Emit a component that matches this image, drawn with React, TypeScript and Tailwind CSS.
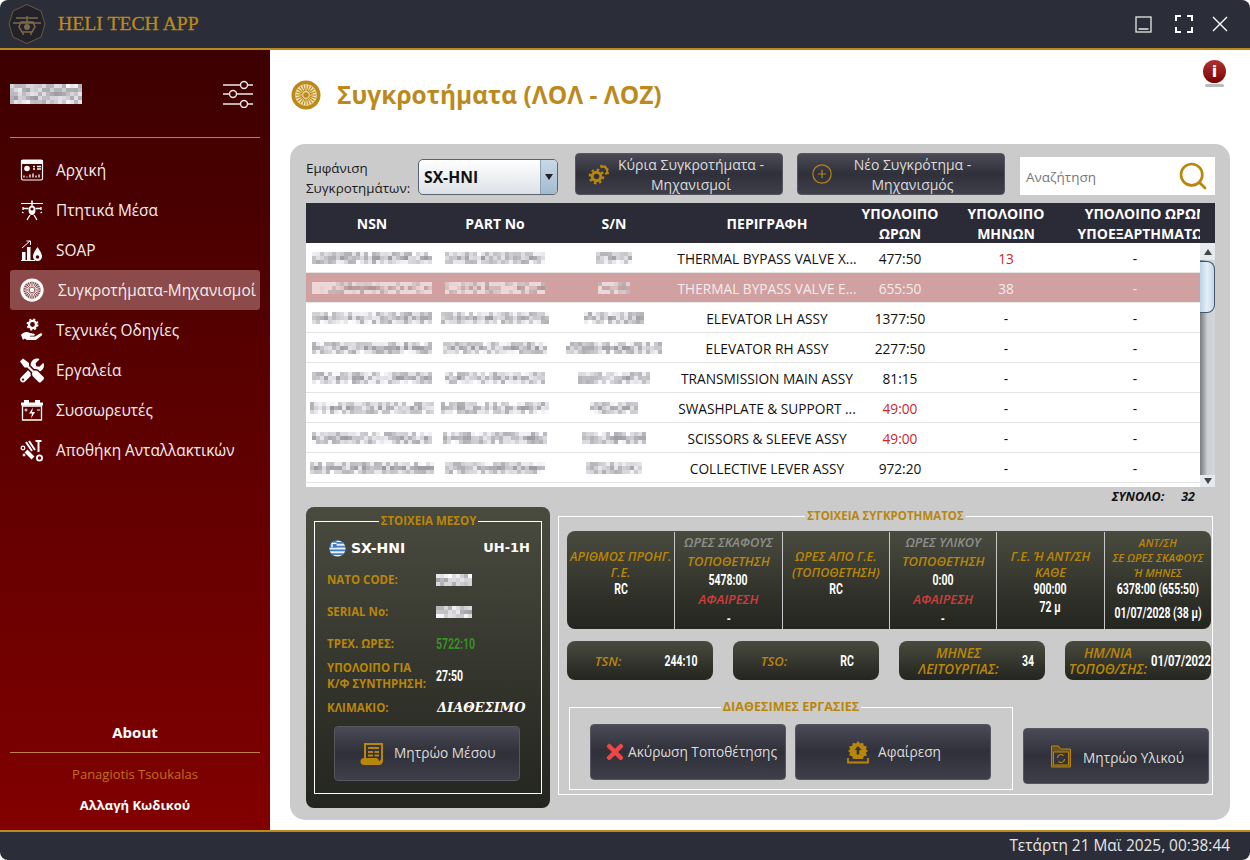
import React from 'react';
import { CirclePlus, Search } from 'lucide-react';
import { FaTimes, FaTools } from 'react-icons/fa';

const GOLD = '#b8860b';

// mosaic used for the censored values
const Pix = ({ w, seed, pink, h = 3 }: { w: number; seed: number; pink?: boolean; h?: number }) => {
  const cols = Math.round(w / 4);
  return (
    <div className="flex flex-col shrink-0" style={{ width: cols * 4 }}>
      {Array.from({ length: h }).map((_, r) => (
        <div key={r} className="flex h-[4px]">
          {Array.from({ length: cols }).map((_, c) => {
            const n = Math.abs(Math.sin(seed * 12.9 + c * 78.2 + r * 37.7) * 43758.5) % 1;
            const edge = r === 0 || r === h - 1 ? 20 : 0;
            const v = Math.round(155 + n * 80 + edge);
            const bg = pink
              ? `rgb(${Math.min(240, v + 20)},${Math.min(215, v - 5)},${Math.min(215, v - 5)})`
              : `rgb(${v},${v},${Math.min(255, v + 4)})`;
            return <span key={c} className="w-[4px] h-[4px]" style={{ background: bg }} />;
          })}
        </div>
      ))}
    </div>
  );
};

const Num = ({ children, className = '', size = 'text-[14px]', leading = 'leading-[16px]' }: { children: React.ReactNode; className?: string; size?: string; leading?: string }) => (
  <span className={`inline-block scale-x-75 font-['Roboto'] font-bold whitespace-nowrap ${size} ${leading} ${className}`}>
    {children}
  </span>
);

const Wheel = ({ size, color, hub }: { size: number; color: string; hub: string }) => (
  <svg width={size} height={size} viewBox="0 0 32 32">
    <circle cx="16" cy="16" r="15.5" fill={color} />
    <circle cx="16" cy="16" r="11.5" fill={hub} />
    {Array.from({ length: 20 }).map((_, i) => {
      const a = (i * Math.PI) / 10;
      return (
        <line
          key={i}
          x1={16 + Math.cos(a) * 4}
          y1={16 + Math.sin(a) * 4}
          x2={16 + Math.cos(a) * 11}
          y2={16 + Math.sin(a) * 11}
          stroke={color}
          strokeWidth="1.2"
        />
      );
    })}
    <circle cx="16" cy="16" r="3" fill={color} />
  </svg>
);

const DashIcon = () => (
  <svg width="24" height="24" viewBox="0 0 24 24" fill="none" stroke="#fff">
    <rect x="1.5" y="2" width="21" height="20" rx="1.5" strokeWidth="1.2" />
    <path d="M1.5 2.5h21v3h-21z" fill="#fff" />
    <circle cx="7" cy="10.5" r="2.8" fill="#fff" stroke="none" />
    <path d="M13 8.5h2M13 11h2M17 8.5h4M17 11h4M4 19.5v-2M7 19.5v-1M10 19.5v-3M13 19.5v-4M16 19.5v-2M19 19.5v-3" strokeWidth="1.3" />
  </svg>
);

const HeliIcon = () => (
  <svg width="24" height="24" viewBox="0 0 24 24" fill="#fff" stroke="#fff">
    <path d="M1 5.5h22" strokeWidth="1.2" />
    <path d="M12 2.5v5" strokeWidth="1.6" />
    <path d="M8.5 12c0-3 1.5-4.5 3.5-4.5s3.5 1.5 3.5 4.5-1.5 5-3.5 5-3.5-2-3.5-5z" stroke="none" />
    <circle cx="12" cy="11" r="1.6" fill="#4a0000" stroke="none" />
    <path d="M3 10.5h5.5M15.5 10.5H21M3 9v3M21 9v3M10 17l-3 5M14 17l3 5M2 14l1.5 1M22 14l-1.5 1" strokeWidth="1.3" fill="none" />
  </svg>
);

const SoapIcon = () => (
  <svg width="24" height="24" viewBox="0 0 24 24" fill="#fff">
    <path d="M1 22h14v1H1z" />
    <rect x="2" y="14" width="3.5" height="8" />
    <rect x="7" y="9" width="3.5" height="13" />
    <path d="M2 10l8-7M6.5 3H10.5V7" stroke="#fff" strokeWidth="1" fill="none" />
    <path d="M17.5 9c2 3.500 4.500 6 4.500 9.500a4.500 4.500 0 0 1-9 0C13 15 15.500 12.500 17.500 9z" />
    <circle cx="17.500" cy="19" r="1.800" fill="#4a0000" />
  </svg>
);

const HandGearIcon = () => (
  <svg width="24" height="24" viewBox="0 0 24 24" fill="none">
    <circle cx="12.500" cy="6.500" r="3.600" stroke="#fff" strokeWidth="2.400" />
    <circle cx="12.500" cy="6.500" r="5.200" stroke="#fff" strokeWidth="1.600" strokeDasharray="2.100 2" />
    <path fill="#fff" d="M1 17c3-3.500 6-3.500 9-2l4 .8c1.500.4 1 2-.5 2H10v.6h5l5-3c1.700-.8 3 .7 1.700 2L16 22H7l-2.500-1.500L3 22z" />
  </svg>
);

const BatteryIcon = () => (
  <svg width="24" height="24" viewBox="0 0 24 24" fill="#fff">
    <rect x="4" y="2" width="5" height="3" />
    <rect x="15" y="2" width="5" height="3" />
    <rect x="1" y="4.500" width="22" height="3" />
    <path d="M2.500 8h19v14h-19z" fill="none" stroke="#fff" strokeWidth="1.300" />
    <path d="M13 9.500l-4 6h3l-1 5 4-6.500h-3z" />
    <path d="M4.500 12h3M6 10.500v3M17 12h3" stroke="#fff" />
  </svg>
);

const PartsIcon = () => (
  <svg width="24" height="24" viewBox="0 0 24 24" fill="#fff" stroke="#fff">
    <path d="M15.500 2h6v2h-2v10h-2V4h-2z" stroke="none" />
    <path d="M6 4l6 9M9 3l6 9" strokeWidth="2" />
    <path d="M6 13l7 7" strokeWidth="4" />
    <circle cx="3" cy="10" r="1.800" fill="none" strokeWidth="1.300" />
    <circle cx="19.500" cy="20" r="2.600" fill="none" strokeWidth="1.800" />
    <circle cx="4" cy="17" r="1" />
  </svg>
);

const GearsIcon = () => (
  <svg width="22" height="22" viewBox="0 0 22 22" fill="none" stroke={GOLD}>
    <circle cx="8.500" cy="13.500" r="4.300" strokeWidth="3" />
    <circle cx="8.500" cy="13.500" r="6.700" strokeWidth="2.400" strokeDasharray="2.600 2.660" />
    <path d="M12.500 4.300a4 4 0 1 1 4.800 7" strokeWidth="2.200" />
    <path d="M12.300 2.800a6.200 6.200 0 0 1 7.300 8.600" strokeWidth="1.800" strokeDasharray="2 1.900" />
  </svg>
);

const ScrollIcon = () => (
  <svg width="24" height="24" viewBox="0 0 24 24" fill={GOLD}>
    <path d="M4 1h19v17.500c0 2.500-1.500 4.500-4 4.500H4c-2 0-3.500-1.500-3.500-3.500S2 16 4 16zM6 3v13h10c1.500 0 2.500 1.200 3 3 .7-.3 2-1 2-2.500V3z" />
    <path d="M8 5h11v2H8zM8 9h5v2H8zM14.500 9H19v2h-4.500zM8 12.500h5v2H8zM14.500 12.500H19v2h-4.500z" />
  </svg>
);

const RemoveIcon = () => (
  <svg width="22" height="24" viewBox="0 0 22 24" fill={GOLD}>
    <path d="M11 1l2 2.500 3-.8.800 3 3 .8-.8 3L21 11l-2 1.500.8 3-3 .8-.8 2.700H6l-.8-2.700-3-.8.800-3L1 11l2-1.500-.8-3 3-.8.800-3 3 .8z" />
    <path d="M11 6l3.500 4h-2.200v4.500H9.700V10H7.500z" fill="#34343f" />
    <path d="M1 18v4.500h20V18" fill="none" stroke={GOLD} strokeWidth="1.800" />
  </svg>
);

const FolderIcon = () => (
  <svg width="20" height="24" viewBox="0 0 20 24" fill="none" stroke={GOLD}>
    <path d="M.5 2h7l2 3h10v18H.5z" strokeWidth="1" fill="#6b5220" />
    <rect x="2.500" y="8" width="15" height="13" fill="#34343f" strokeWidth="1" />
    <path d="M6.500 14a3.500 3.500 0 0 1 6-2.400M13.500 15a3.500 3.500 0 0 1-6 2.400" strokeWidth="1.200" />
  </svg>
);

const GreekFlag = () => (
  <svg width="17" height="17" viewBox="0 0 18 18">
    <defs>
      <clipPath id="flagclip">
        <circle cx="9" cy="9" r="8.500" />
      </clipPath>
    </defs>
    <g clipPath="url(#flagclip)">
      <rect width="18" height="18" fill="#e8eef5" />
      <path d="M0 2h18v2H0zM0 6h18v2H0zM0 10h18v2H0zM0 14h18v2H0z" fill="#3f7cc0" />
      <rect width="8" height="8" fill="#3f7cc0" />
      <path d="M3.200 0v8M0 3.500h8" stroke="#fff" strokeWidth="1.400" />
    </g>
  </svg>
);

const navItems = [
  { label: 'Αρχική', icon: <DashIcon /> },
  { label: 'Πτητικά Μέσα', icon: <HeliIcon /> },
  { label: 'SOAP', icon: <SoapIcon /> },
  { label: 'Συγκροτήματα-Μηχανισμοί', icon: <Wheel size={24} color="#fff" hub="#8c4a4a" />, active: true },
  { label: 'Τεχνικές Οδηγίες', icon: <HandGearIcon /> },
  { label: 'Εργαλεία', icon: <FaTools size={25} color="#fff" /> },
  { label: 'Συσσωρευτές', icon: <BatteryIcon /> },
  { label: 'Αποθήκη Ανταλλακτικών', icon: <PartsIcon /> },
];

const rows = [
  { nsn: 120, part: 100, sn: 36, desc: 'THERMAL BYPASS VALVE X...', hrs: '477:50', mon: '13', monRed: true },
  { nsn: 120, part: 100, sn: 32, desc: 'THERMAL BYPASS VALVE E...', hrs: '655:50', mon: '38', active: true },
  { nsn: 120, part: 108, sn: 60, desc: 'ELEVATOR LH ASSY', hrs: '1377:50', mon: '-' },
  { nsn: 120, part: 104, sn: 96, desc: 'ELEVATOR RH ASSY', hrs: '2277:50', mon: '-' },
  { nsn: 120, part: 100, sn: 72, desc: 'TRANSMISSION MAIN ASSY', hrs: '81:15', mon: '-' },
  { nsn: 124, part: 108, sn: 48, desc: 'SWASHPLATE & SUPPORT ...', hrs: '49:00', hrsRed: true, mon: '-' },
  { nsn: 120, part: 104, sn: 64, desc: 'SCISSORS & SLEEVE ASSY', hrs: '49:00', hrsRed: true, mon: '-' },
  { nsn: 124, part: 100, sn: 56, desc: 'COLLECTIVE LEVER ASSY', hrs: '972:20', mon: '-' },
];

const tableCols = 'grid grid-cols-[132px_114px_124px_182px_84px_128px_130px]';

const DarkButton = ({ className, children }: { className: string; children: React.ReactNode }) => (
  <button className={`flex items-center rounded-[4px] border border-[#55565f] bg-gradient-to-b from-[#4a4b56] via-[#30303a] to-[#3e3f49] text-[#dcdcdc] text-[13.7px] ${className}`}>
    {children}
  </button>
);

const Legend = ({ children, size = 'text-[11.5px]' }: { children: React.ReactNode; size?: string }) => (
  <legend className={`mx-auto px-[2px] leading-[14px] font-bold text-[#b8860b] whitespace-nowrap ${size}`}>{children}</legend>
);

const cardBg = 'bg-gradient-to-b from-[#4a4b3f] to-[#23251f]';
const goldLabel = 'text-[11.5px] font-bold text-[#b8860b] leading-[16px]';
const italic = 'italic font-semibold whitespace-nowrap';
const italicGold = `${italic} text-[12.6px] text-[#b8860b] leading-[16px]`;
const italicGoldTall = `${italic} text-[13px] text-[#b8860b] leading-[19px]`;
const italicGoldSmall = `${italic} text-[11px] text-[#b8860b] leading-[15px]`;
const italicGrey = `${italic} text-[12.8px] text-[#8c8f8c] leading-[19px]`;
const italicRed = `${italic} text-[13px] text-[#d23c3c] leading-[19px]`;

const InfoRow = ({ label, children, h = 'h-[32px]' }: { label: React.ReactNode; children: React.ReactNode; h?: string }) => (
  <div className={`flex items-center ${h}`}>
    <div className={`w-[109px] ${goldLabel}`}>{label}</div>
    {children}
  </div>
);

const SmallCard = ({ label, value, labelBox, labelSize, valueSize }: { label: React.ReactNode; value: string; labelBox: string; labelSize: string; valueSize?: string }) => (
  <div className={`flex items-center w-[146px] h-[39px] rounded-[8px] ${cardBg}`}>
    <div className={`${labelBox} text-center ${italic} text-[#b8860b] leading-[16px] ${labelSize}`}>{label}</div>
    <div className="flex-1 flex justify-center min-w-0">
      <Num className="text-white" size={valueSize}>{value}</Num>
    </div>
  </div>
);

export default function App() {
  return (
    <div className="w-[1250px] h-[860px] flex flex-col overflow-hidden rounded-[8px] bg-white font-['Open_Sans',sans-serif]">
      {/* title bar */}
      <div className="h-[50px] shrink-0 flex items-center bg-[#2b2d38] border-b-2 border-[#bc8a1c] pl-[8px] pr-[22px]">
        <svg width="38" height="40" viewBox="0 0 38 40" fill="none">
          <path d="M19 .5l14 6.500 4 13-4 13-14 6.500-14-6.500L1 20 5 7z" fill="#23222a" stroke="#6b5a3a" />
          <path d="M8 14h22M19 12v6M5 19h28M13 18h12l2 5-3 5H14l-3-5zM15 28v3M23 28v3" stroke="#7c6a48" strokeWidth="1.500" />
          <circle cx="19" cy="23" r="3" fill="#7c6a48" />
        </svg>
        <div className="ml-[12px] font-['Liberation_Serif',serif] text-[19.7px] text-[#bc8a1c] [-webkit-text-stroke:0.3px_#bc8a1c]">HELI TECH APP</div>
        <div className="ml-auto flex items-center">
          <svg width="17" height="17" viewBox="0 0 17 17" fill="none" stroke="#e8e8e8" strokeWidth="1.300">
            <rect x="1" y="1" width="15" height="15" />
            <path d="M3.500 13h10" />
          </svg>
          <svg width="18" height="18" viewBox="0 0 18 18" fill="none" stroke="#fff" strokeWidth="2" className="ml-[23px]">
            <path d="M1 6V1h5M12 1h5v5M17 12v5h-5M6 17H1v-5" />
          </svg>
          <svg width="16" height="16" viewBox="0 0 16 16" fill="none" stroke="#fff" strokeWidth="1.400" className="ml-[19px]">
            <path d="M1 1l14 14M15 1L1 15" />
          </svg>
        </div>
      </div>

      <div className="flex flex-1 min-h-0">
        {/* sidebar */}
        <aside className="w-[270px] shrink-0 flex flex-col bg-gradient-to-b from-[#3d0000] to-[#820000] px-[10px]">
          <div className="h-[88px] flex items-center justify-between border-b border-[#c08040]">
            <div className="mt-[1px]">
              <Pix w={72} seed={3} h={5} />
            </div>
            <svg width="30" height="28" viewBox="0 0 30 28" fill="none" stroke="#f0e8e8" strokeWidth="1.400" className="mr-[7px]">
              <path d="M0 5h17M25 5h5M0 14h6M14 14h16M0 24h17M25 24h5" />
              <circle cx="21" cy="5" r="3.500" />
              <circle cx="10" cy="14" r="3.500" />
              <circle cx="21" cy="24" r="3.500" />
            </svg>
          </div>
          <nav className="mt-[12px] flex flex-col">
            {navItems.map((n) => (
              <div
                key={n.label}
                className={`h-[40px] flex items-center pl-[10px] text-[15.4px] rounded-[3px] whitespace-nowrap ${n.active ? 'bg-[#8c4a4a]' : ''}`}
              >
                <span className="w-[24px] flex justify-center">{n.icon}</span>
                <span className={n.active ? 'ml-[14px] pt-[2px] text-[#f4eeee]' : 'ml-[12px] pt-[2px] text-[#f4eeee]'}>{n.label}</span>
              </div>
            ))}
          </nav>
          <div className="mt-auto text-center">
            <div className="font-bold text-[15px] text-white pb-[9px] border-b border-[#c08040]">About</div>
            <div className="mt-[12px] text-[13px] leading-[18px] text-[#c0701a]">Panagiotis Tsoukalas</div>
            <div className="mt-[13px] mb-[16px] font-bold text-[13px] leading-[18px] text-white">Αλλαγή Κωδικού</div>
          </div>
        </aside>

        {/* content */}
        <main className="flex-1 flex flex-col px-[20px] min-w-0">
          <div className="h-[94px] shrink-0 flex items-start">
            <div className="mt-[30px] ml-[1px]">
              <Wheel size={30} color="#bc8a1c" hub="#f6e6b8" />
            </div>
            <h1 className="ml-[16px] mt-[28px] text-[24.5px] leading-[34px] font-bold text-[#bc8a1c] whitespace-nowrap">Συγκροτήματα (ΛΟΛ - ΛΟΖ)</h1>
            <div className="ml-auto mt-[10px] mr-[4px] flex flex-col items-center">
              <div className="w-[23px] h-[23px] rounded-full bg-gradient-to-b from-[#b03030] to-[#7a0000] flex items-center justify-center text-white font-['DejaVu_Sans'] font-bold text-[16px] leading-none">
                i
              </div>
              <div className="w-[19px] h-[3px] mt-[1px] rounded-full bg-[#bbbbbb]" />
            </div>
          </div>

          <section className="w-[940px] h-[676px] rounded-[15px] bg-[#cbcbcb] pl-[16px] pr-[15px] pt-[9px]">
            {/* toolbar */}
            <div className="flex h-[42px]">
              <div className="w-[112px] pt-[5px] text-[13.4px] leading-[20px] text-[#1a1a1a] whitespace-nowrap">
                Εμφάνιση<br />Συγκροτημάτων:
              </div>
              <div className="mt-[6px] w-[140px] h-[36px] flex rounded-[5px] border border-[#5a6470] bg-gradient-to-b from-white to-[#dde1e6] overflow-hidden">
                <span className="flex-1 pl-[5px] leading-[35px] font-bold text-[15.7px] text-[#111]">SX-HNI</span>
                <span className="w-[17px] flex items-center justify-center border-l border-[#8fa2b4] bg-gradient-to-b from-[#c9d8e6] to-[#a3bbd0]">
                  <span className="border-x-[4px] border-x-transparent border-t-[6px] border-t-[#222]" />
                </span>
              </div>
              <DarkButton className="ml-[17px] w-[208px] h-[42px] pl-[12px]">
                <GearsIcon />
                <span className="flex-1 text-center text-[14px] leading-[20px] pr-[10px] pt-[2px]">Κύρια Συγκροτήματα -<br />Μηχανισμοί</span>
              </DarkButton>
              <DarkButton className="ml-[14px] w-[208px] h-[42px] pl-[13px]">
                <CirclePlus size={22} color={GOLD} strokeWidth={1.3} className="shrink-0" />
                <span className="flex-1 text-center text-[14px] leading-[20px] pr-[12px] pt-[2px]">Νέο Συγκρότημα -<br />Μηχανισμός</span>
              </DarkButton>
              <div className="ml-[15px] mt-[4px] w-[195px] h-[38px] bg-white flex items-center pl-[6px] pr-[6px]">
                <input placeholder="Αναζήτηση" className="flex-1 min-w-0 mt-[3px] outline-none text-[13.5px] placeholder:text-[#777]" />
                <Search size={32} color={GOLD} strokeWidth={2} />
              </div>
            </div>

            {/* table */}
            <div className="mt-[8px] w-[909px] bg-white">
              <div className="h-[40px] bg-[#2b2b38]">
                <div className={`${tableCols} h-[40px] w-[894px] pt-[1px] overflow-hidden text-white font-bold text-[14px] leading-[20px] text-center items-center`}>
                  <div>NSN</div>
                  <div>PART No</div>
                  <div>S/N</div>
                  <div>ΠΕΡΙΓΡΑΦΗ</div>
                  <div>ΥΠΟΛΟΙΠΟ<br />ΩΡΩΝ</div>
                  <div>ΥΠΟΛΟΙΠΟ<br />ΜΗΝΩΝ</div>
                  <div className="overflow-hidden whitespace-nowrap">
                    <div className="w-[152px]">ΥΠΟΛΟΙΠΟ ΩΡΩΝ<br />ΥΠΟΕΞΑΡΤΗΜΑΤΩΝ</div>
                  </div>
                </div>
              </div>
              <div className="flex h-[244px]">
                <div className="w-[894px]">
                  {rows.map((r, i) => (
                    <div
                      key={i}
                      className={`${tableCols} h-[30px] items-center text-center text-[13.7px] border-b ${r.active ? 'bg-[#d1a0a0] text-[#f4ecec] border-[#e8e8e8]' : 'text-[#111] border-[#e4e4e4]'}`}
                    >
                      <div className="flex justify-center"><Pix w={r.nsn} seed={i * 3 + 1} pink={r.active} /></div>
                      <div className="flex justify-center"><Pix w={r.part} seed={i * 3 + 2} pink={r.active} /></div>
                      <div className="flex justify-center"><Pix w={r.sn} seed={i * 3 + 3} pink={r.active} /></div>
                      <div className="pt-[4px] whitespace-nowrap">{r.desc}</div>
                      <div className={`pt-[4px] ${r.hrsRed ? 'text-[#c8282c]' : ''}`}>{r.hrs}</div>
                      <div className={`pt-[4px] ${r.monRed ? 'text-[#c8282c]' : ''}`}>{r.mon}</div>
                      <div className="pt-[4px]">-</div>
                    </div>
                  ))}
                </div>
                {/* scrollbar */}
                <div className="w-[15px] flex flex-col">
                  <div className="h-[17px] bg-[#e6e9ee] flex justify-center items-center">
                    <span className="border-x-[4px] border-x-transparent border-b-[6px] border-b-[#444]" />
                  </div>
                  <div className="flex-1 bg-gradient-to-r from-[#77797d] via-[#cdd0d5] to-[#d4d6da]">
                    <div className="mt-[1px] w-[15px] h-[52px] rounded-r-[8px] border border-l-0 border-[#40566c] bg-gradient-to-r from-[#b9d3e8] via-[#e4eff8] to-[#c3d7e8]" />
                  </div>
                  <div className="h-[12px] bg-[#e6e9ee] flex justify-center items-center">
                    <span className="border-x-[4px] border-x-transparent border-t-[6px] border-t-[#444]" />
                  </div>
                </div>
              </div>
            </div>

            <div className="h-[20px] flex items-center justify-end pr-[20px] italic font-bold text-[12.5px] text-[#111]">
              <span>ΣΥΝΟΛΟ:</span>
              <span className="ml-[17px]">32</span>
            </div>

            {/* bottom area */}
            <div className="flex">
              <div className={`w-[244px] h-[301px] rounded-[8px] px-[8px] pt-[7px] ${cardBg}`}>
                <fieldset className="h-[280px] border border-white pl-[12px] pr-[11px]">
                  <Legend>ΣΤΟΙΧΕΙΑ ΜΕΣΟΥ</Legend>
                  <div className="mt-[4px] h-[32px] flex items-center justify-between font-['DejaVu_Sans'] font-bold text-[13px] text-white">
                    <span className="flex items-center gap-[5px] ml-[2px]"><GreekFlag /><span className="text-[14px]">SX-HNI</span></span>
                    <span>UH-1H</span>
                  </div>
                  <InfoRow label="NATO CODE:"><Pix w={36} seed={30} h={3} /></InfoRow>
                  <InfoRow label="SERIAL No:"><Pix w={36} seed={33} h={3} /></InfoRow>
                  <InfoRow label="ΤΡΕΧ. ΩΡΕΣ:"><Num className="text-[#3a8f26] origin-left">5722:10</Num></InfoRow>
                  <InfoRow label={<>ΥΠΟΛΟΙΠΟ ΓΙΑ<br />Κ/Φ ΣΥΝΤΗΡΗΣΗ:</>}><Num className="text-white origin-left">27:50</Num></InfoRow>
                  <InfoRow label="ΚΛΙΜΑΚΙΟ:">
                    <span className="ml-[1px] font-['DejaVu_Serif'] italic font-bold text-[13px] text-white">ΔΙΑΘΕΣΙΜΟ</span>
                  </InfoRow>
                  <DarkButton className="mt-[2px] ml-[7px] w-[186px] h-[55px] pl-[25px]">
                    <ScrollIcon />
                    <span className="ml-[10px]">Μητρώο Μέσου</span>
                  </DarkButton>
                </fieldset>
              </div>

              <fieldset className="ml-[8px] mt-[2px] w-[655px] h-[286px] border border-white">
                <Legend>ΣΤΟΙΧΕΙΑ ΣΥΓΚΡΟΤΗΜΑΤΟΣ</Legend>
                <div className="pl-[8px]">
                  <div className={`mt-[8px] w-[644px] h-[98px] rounded-[8px] grid grid-cols-6 text-center ${cardBg}`}>
                    <div className="pt-[18px] flex flex-col items-center">
                      <span className={italicGold}>ΑΡΙΘΜΟΣ ΠΡΟΗΓ.</span>
                      <span className={italicGold}>Γ.Ε.</span>
                      <Num className="text-white">RC</Num>
                    </div>
                    <div className="flex flex-col items-center pt-[1px] border-l border-[#c8c8c8] my-[1px]">
                      <span className={italicGrey}>ΩΡΕΣ ΣΚΑΦΟΥΣ</span>
                      <span className={italicGoldTall}>ΤΟΠΟΘΕΤΗΣΗ</span>
                      <Num className="text-white" leading="leading-[19px]">5478:00</Num>
                      <span className={italicRed}>ΑΦΑΙΡΕΣΗ</span>
                      <Num className="text-white" leading="leading-[20px]">-</Num>
                    </div>
                    <div className="flex flex-col items-center pt-[17px] border-l border-[#c8c8c8] my-[1px]">
                      <span className={italicGold}>ΩΡΕΣ ΑΠΟ Γ.Ε.</span>
                      <span className={italicGold}>(ΤΟΠΟΘΕΤΗΣΗ)</span>
                      <Num className="text-white">RC</Num>
                    </div>
                    <div className="flex flex-col items-center pt-[1px] border-l border-[#c8c8c8] my-[1px]">
                      <span className={italicGrey}>ΩΡΕΣ ΥΛΙΚΟΥ</span>
                      <span className={italicGoldTall}>ΤΟΠΟΘΕΤΗΣΗ</span>
                      <Num className="text-white" leading="leading-[19px]">0:00</Num>
                      <span className={italicRed}>ΑΦΑΙΡΕΣΗ</span>
                      <Num className="text-white" leading="leading-[20px]">-</Num>
                    </div>
                    <div className="flex flex-col items-center pt-[17px] border-l border-[#c8c8c8] my-[1px]">
                      <span className={italicGold}>Γ.Ε. Ή ΑΝΤ/ΣΗ</span>
                      <span className={italicGold}>ΚΑΘΕ</span>
                      <Num className="text-white">900:00</Num>
                      <Num className="text-white mt-[2px]">72 μ</Num>
                    </div>
                    <div className="flex flex-col items-center pt-[3px] border-l border-[#c8c8c8] my-[1px]">
                      <span className={italicGoldSmall}>ΑΝΤ/ΣΗ</span>
                      <span className={italicGoldSmall}>ΣΕ ΩΡΕΣ ΣΚΑΦΟΥΣ</span>
                      <span className={italicGoldSmall}>Ή ΜΗΝΕΣ</span>
                      <Num className="text-white mt-[1px]">6378:00 (655:50)</Num>
                      <Num className="text-white mt-[8px]">01/07/2028 (38 μ)</Num>
                    </div>
                  </div>
                  <div className="mt-[12px] w-[644px] flex justify-between">
                    <SmallCard label="TSN:" value="244:10" labelBox="w-[82px]" labelSize="text-[13px]" />
                    <SmallCard label="TSO:" value="RC" labelBox="w-[82px]" labelSize="text-[13px]" />
                    <SmallCard label={<>ΜΗΝΕΣ<br />ΛΕΙΤΟΥΡΓΙΑΣ:</>} value="34" labelBox="w-[112px] pl-[7px]" labelSize="text-[13.5px]" />
                    <SmallCard label={<>ΗΜ/ΝΙΑ<br />ΤΟΠΟΘ/ΣΗΣ:</>} value="01/07/2022" labelBox="w-[86px]" labelSize="text-[13.5px]" valueSize="text-[15px]" />
                  </div>
                  <div className="mt-[20px] flex items-start">
                    <fieldset className="ml-[2px] w-[444px] h-[90px] border border-white">
                      <Legend size="text-[12.6px]">ΔΙΑΘΕΣΙΜΕΣ ΕΡΓΑΣΙΕΣ</Legend>
                      <div className="mt-[10px] pl-[20px] flex gap-[9px]">
                        <DarkButton className="w-[196px] h-[56px] pl-[12px]">
                          <FaTimes size={24} color="#f04545" />
                          <span className="ml-[1px] whitespace-nowrap">Ακύρωση Τοποθέτησης</span>
                        </DarkButton>
                        <DarkButton className="w-[196px] h-[56px] pl-[51px]">
                          <RemoveIcon />
                          <span className="ml-[9px]">Αφαίρεση</span>
                        </DarkButton>
                      </div>
                    </fieldset>
                    <DarkButton className="ml-[10px] mt-[28px] w-[186px] h-[56px] pl-[27px]">
                      <FolderIcon />
                      <span className="ml-[12px] mt-[4px] whitespace-nowrap">Μητρώο Υλικού</span>
                    </DarkButton>
                  </div>
                </div>
              </fieldset>
            </div>
          </section>
        </main>
      </div>

      {/* status bar */}
      <div className="h-[30px] shrink-0 flex items-center justify-end bg-[#2b2d38] border-t-2 border-[#bc8a1c] pr-[20px] text-[15.4px] text-[#e6e6e6]">
        Τετάρτη 21 Μαϊ 2025, 00:38:44
      </div>
    </div>
  );
}
